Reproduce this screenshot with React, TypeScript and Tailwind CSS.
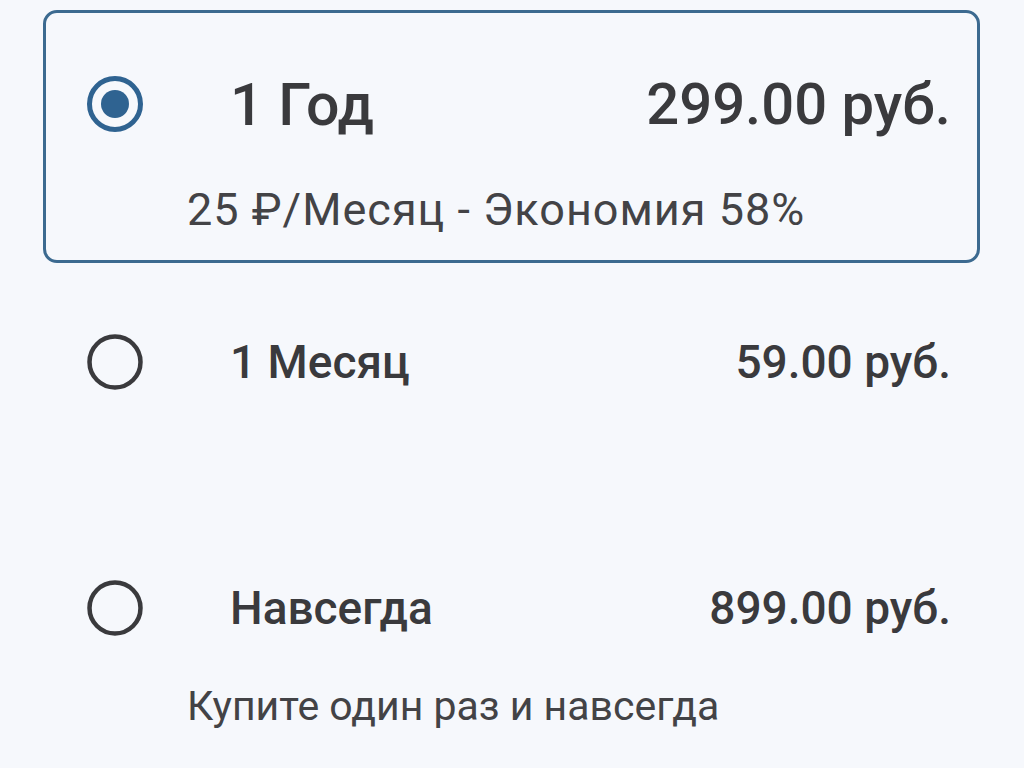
const plans = [
  {
    id: 'year',
    title: '1 Год',
    price: '299.00 руб.',
    note: '25 ₽/Месяц - Экономия 58%',
  },
  { id: 'month', title: '1 Месяц', price: '59.00 руб.', note: '' },
  {
    id: 'forever',
    title: 'Навсегда',
    price: '899.00 руб.',
    note: 'Купите один раз и навсегда',
  },
];

function Radio({ checked }: { checked: boolean }) {
  return (
    <svg width="60" height="60" viewBox="0 0 60 60" className="shrink-0">
      {checked ? (
        <>
          <circle cx="30" cy="30" r="25.5" fill="none" stroke="#2f6391" strokeWidth="5" />
          <circle cx="30" cy="30" r="14" fill="#2f6391" />
        </>
      ) : (
        <circle cx="30" cy="30" r="25.5" fill="none" stroke="#3a3a3d" strokeWidth="4.5" />
      )}
    </svg>
  );
}

export default function App() {
  const selected = 'year';

  return (
    <div
      className="min-h-screen w-full bg-[#f6f8fc] pt-[10px] pl-[43px] pr-[44px] overflow-hidden"
      style={{ fontFamily: 'Roboto, "Noto Sans", sans-serif' }}
    >
      {/* 1 year */}
      <div className="rounded-[14px] border-[3px] border-[#3c6a90] pl-[39px] pr-[26px] pt-[59px] pb-[26px]">
        <div className="flex h-[64px] items-center text-[#3a3a3d]">
          <Radio checked={selected === 'year'} />
          <span className="ml-[85px] text-[59px] font-medium leading-none">{plans[0].title}</span>
          <span className="ml-auto text-[58px] font-medium leading-none">{plans[0].price}</span>
        </div>
        <div className="ml-[102px] mt-[50px] h-[48px] text-[45px] leading-[48px] tracking-[1px] text-[#434346]">
          {plans[0].note}
        </div>
      </div>

      {/* 1 month */}
      <div className="mt-[5px] h-[241px] rounded-[14px] border-[3px] border-transparent pl-[39px] pr-[26px] pt-[59px]">
        <div className="flex h-[64px] items-center text-[#3a3a3d]">
          <Radio checked={false} />
          <span className="ml-[85px] text-[46px] font-medium leading-none">{plans[1].title}</span>
          <span className="ml-auto text-[46px] font-medium leading-none">{plans[1].price}</span>
        </div>
      </div>

      {/* forever */}
      <div className="mt-[5px] rounded-[14px] border-[3px] border-transparent pl-[39px] pr-[26px] pt-[59px] pb-[26px]">
        <div className="flex h-[64px] items-center text-[#3a3a3d]">
          <Radio checked={false} />
          <span className="ml-[85px] text-[46px] font-medium leading-none">{plans[2].title}</span>
          <span className="ml-auto text-[46px] font-medium leading-none">{plans[2].price}</span>
        </div>
        <div className="ml-[102px] mt-[42px] h-[48px] text-[41px] leading-[48px] text-[#434346]">
          {plans[2].note}
        </div>
      </div>
    </div>
  );
}
